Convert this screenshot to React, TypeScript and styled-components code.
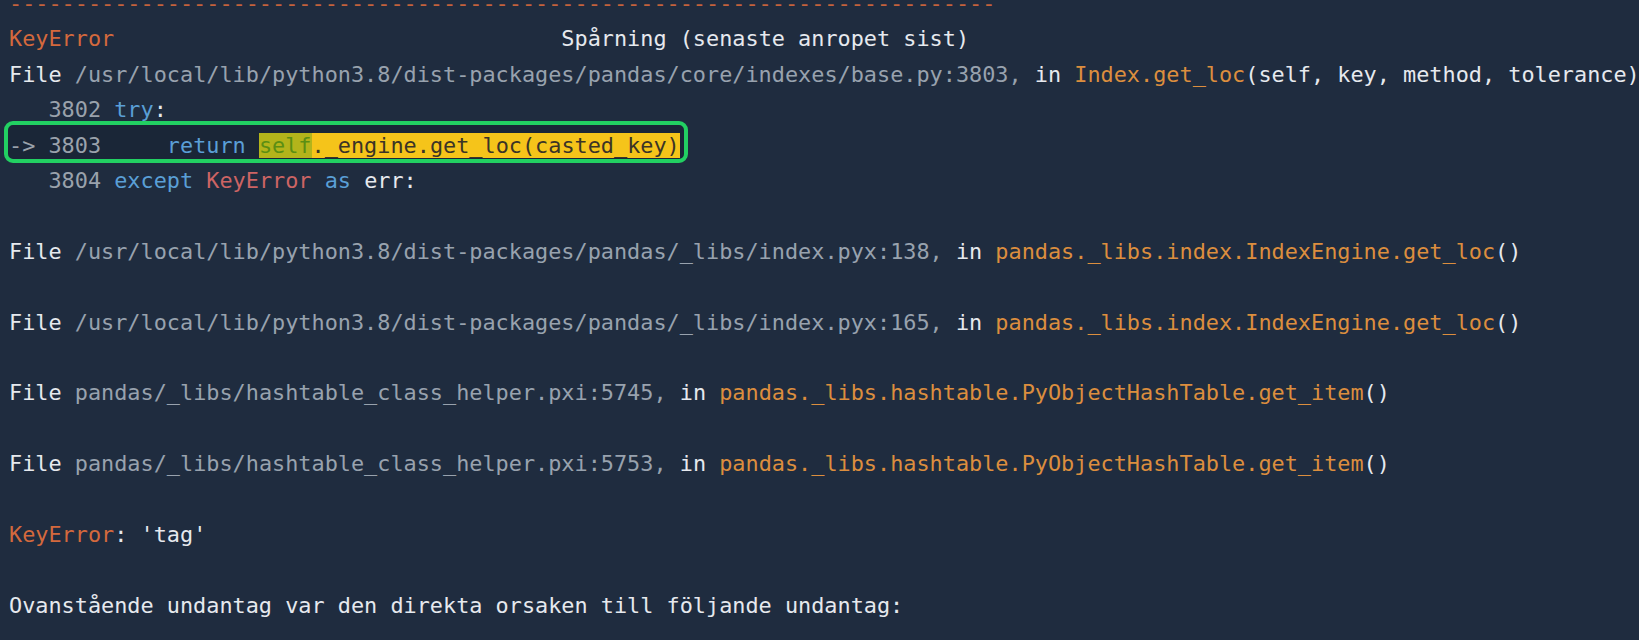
import React from "react";
import styled, { createGlobalStyle, css } from "styled-components";

const BG = "#1f2c3f";

const Global = createGlobalStyle`
  html, body {
    margin: 0;
    padding: 0;
    background: ${BG};
    overflow: hidden;
  }
`;

const Terminal = styled.div`
  margin-top: -14px;
  padding-left: 9px;
  font-family: "DejaVu Sans Mono", "Liberation Mono", monospace;
  font-size: 21.85px;
  color: #e6e9ee;
  background: ${BG};
  min-height: 680px;
`;

const Line = styled.div`
  height: 35.4px;
  line-height: 35.4px;
  white-space: pre;
`;

const HighlightLine = styled(Line)`
  position: relative;
  width: fit-content;
  &::before {
    content: "";
    position: absolute;
    left: -5px;
    right: -8px;
    top: -7px;
    bottom: 0px;
    border: 4px solid #22d062;
    border-radius: 9px;
    background: rgba(10, 18, 30, 0.25);
    z-index: 0;
  }
  & > * {
    position: relative;
    z-index: 1;
  }
`;

type Variant =
  | "plain"
  | "dash"
  | "err"
  | "path"
  | "func"
  | "kw"
  | "exc"
  | "num";

const colors: Record<Variant, string> = {
  plain: "#e6e9ee",
  dash: "#c4623c",
  err: "#d4693d",
  path: "#98a2ae",
  func: "#dc8e3e",
  kw: "#5a9fd6",
  exc: "#cd6464",
  num: "#9aa2ac",
};

const Tok = styled.span<{ $v: Variant }>`
  color: ${(p) => colors[p.$v]};
`;

const Mark = styled.span<{ $tone: "lime" | "yellow" }>`
  ${(p) =>
    p.$tone === "lime"
      ? css`
          background: #b3b41b;
          color: #5b8e13;
        `
      : css`
          background: #f5c41a;
          color: #3b3426;
        `}
`;

const FileLine: React.FC<{ path: string; fn: string; args: string }> = ({
  path,
  fn,
  args,
}) => (
  <Line>
    <Tok $v="plain">File </Tok>
    <Tok $v="path">{path},</Tok>
    <Tok $v="plain"> in </Tok>
    <Tok $v="func">{fn}</Tok>
    <Tok $v="plain">{args}</Tok>
  </Line>
);

const Blank = () => <Line> </Line>;

export default function App() {
  return (
    <>
      <Global />
      <Terminal>
        <Line>
          <Tok $v="dash">{"-".repeat(75)}</Tok>
        </Line>
        <Line>
          <Tok $v="err">KeyError</Tok>
          <Tok $v="plain">{" ".repeat(34)}Spårning (senaste anropet sist)</Tok>
        </Line>
        <FileLine
          path="/usr/local/lib/python3.8/dist-packages/pandas/core/indexes/base.py:3803"
          fn="Index.get_loc"
          args="(self, key, method, tolerance)"
        />
        <Line>
          <Tok $v="num">{"   3802 "}</Tok>
          <Tok $v="kw">try</Tok>
          <Tok $v="plain">:</Tok>
        </Line>
        <HighlightLine>
          <Tok $v="num">{"-> 3803     "}</Tok>
          <Tok $v="kw">return</Tok>
          <Tok $v="plain"> </Tok>
          <Mark $tone="lime">self</Mark>
          <Mark $tone="yellow">._engine.get_loc(casted_key)</Mark>
        </HighlightLine>
        <Line>
          <Tok $v="num">{"   3804 "}</Tok>
          <Tok $v="kw">except</Tok>
          <Tok $v="plain"> </Tok>
          <Tok $v="exc">KeyError</Tok>
          <Tok $v="plain"> </Tok>
          <Tok $v="kw">as</Tok>
          <Tok $v="plain"> err:</Tok>
        </Line>
        <Blank />
        <FileLine
          path="/usr/local/lib/python3.8/dist-packages/pandas/_libs/index.pyx:138"
          fn="pandas._libs.index.IndexEngine.get_loc"
          args="()"
        />
        <Blank />
        <FileLine
          path="/usr/local/lib/python3.8/dist-packages/pandas/_libs/index.pyx:165"
          fn="pandas._libs.index.IndexEngine.get_loc"
          args="()"
        />
        <Blank />
        <FileLine
          path="pandas/_libs/hashtable_class_helper.pxi:5745"
          fn="pandas._libs.hashtable.PyObjectHashTable.get_item"
          args="()"
        />
        <Blank />
        <FileLine
          path="pandas/_libs/hashtable_class_helper.pxi:5753"
          fn="pandas._libs.hashtable.PyObjectHashTable.get_item"
          args="()"
        />
        <Blank />
        <Line>
          <Tok $v="err">KeyError</Tok>
          <Tok $v="plain">: 'tag'</Tok>
        </Line>
        <Blank />
        <Line>
          <Tok $v="plain">
            Ovanstående undantag var den direkta orsaken till följande undantag:
          </Tok>
        </Line>
      </Terminal>
    </>
  );
}
